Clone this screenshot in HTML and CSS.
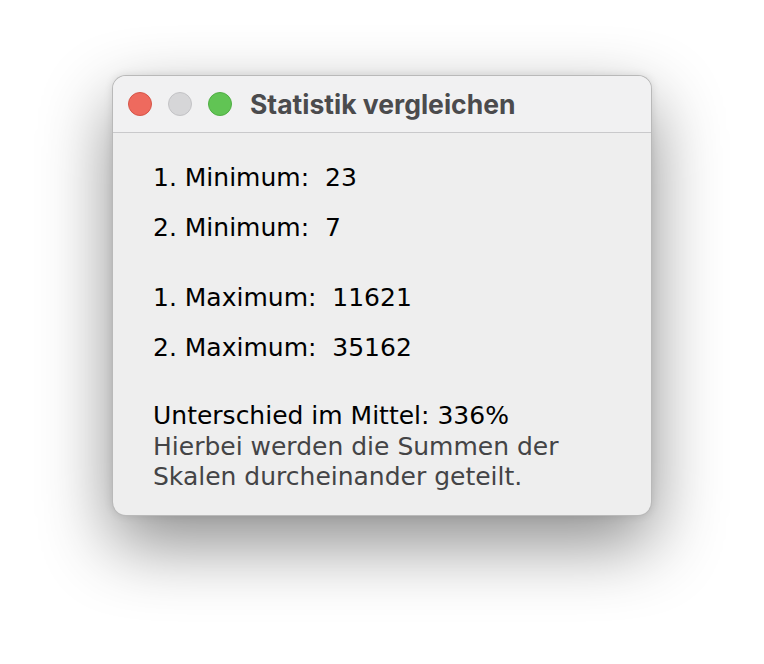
FILE: index.html
```html
<!DOCTYPE html>
<html>
<head>
<meta charset="utf-8">
<link rel="stylesheet" href="styles.css">
</head>
<body>
<div class="window">
  <div class="titlebar">
    <div class="lights">
      <span class="light red"></span>
      <span class="light gray"></span>
      <span class="light green"></span>
    </div>
    <div class="title">Statistik vergleichen</div>
  </div>
  <div class="content">
    <div class="group">
      <div class="row">1. Minimum:&nbsp; 23</div>
      <div class="row">2. Minimum:&nbsp; 7</div>
    </div>
    <div class="group">
      <div class="row">1. Maximum:&nbsp; 11621</div>
      <div class="row">2. Maximum:&nbsp; 35162</div>
    </div>
    <div class="note">
      <div class="note-main">Unterschied im Mittel: 336%</div>
      <div class="note-sub">Hierbei werden die Summen der<br>Skalen durcheinander geteilt.</div>
    </div>
  </div>
</div>
</body>
</html>
```
FILE: styles.css
```css
html, body {
  margin: 0;
  padding: 0;
  background: #ffffff;
}
body {
  width: 764px;
  height: 664px;
  overflow: hidden;
  padding-top: 75px;
  padding-left: 112px;
  box-sizing: border-box;
}
.window {
  width: 540px;
  height: 441px;
  box-sizing: border-box;
  background: #eeeeee;
  border-radius: 14px;
  border: 1px solid rgba(0,0,0,0.22);
  box-shadow: 0 28px 70px rgba(0,0,0,0.45), 0 0 8px rgba(0,0,0,0.1);
  overflow: hidden;
  display: flex;
  flex-direction: column;
}
.titlebar {
  height: 56px;
  flex: none;
  background: #f1f1f2;
  border-bottom: 1px solid #c9c9cb;
  display: flex;
  align-items: center;
  padding-left: 15px;
}
.lights {
  display: flex;
  gap: 16px;
}
.light {
  width: 24px;
  height: 24px;
  border-radius: 50%;
  box-sizing: border-box;
}
.red { background: #ee6a5e; border: 1px solid #d65548; }
.gray { background: #d6d6d8; border: 1px solid #c3c3c6; }
.green { background: #61c454; border: 1px solid #4fae43; }
.title {
  margin-left: 18px;
  font-family: Inter, "Liberation Sans", sans-serif;
  font-weight: 700;
  font-size: 26.5px;
  color: #4b4b4d;
}
.content {
  padding: 20px 0 0 40px;
  font-family: "DejaVu Sans", sans-serif;
  font-size: 25px;
  color: #000;
}
.group {
  display: flex;
  flex-direction: column;
}
.group + .group {
  margin-top: 20px;
}
.row {
  height: 50px;
  line-height: 50px;
}
.note {
  margin-top: 28px;
  line-height: 30.5px;
}
.note-sub {
  color: #444446;
}
```
